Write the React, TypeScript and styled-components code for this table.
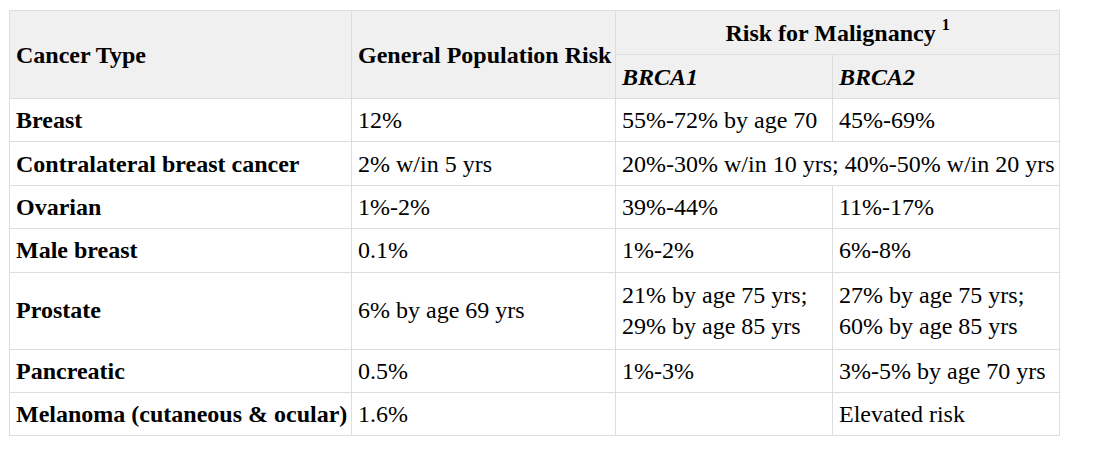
import styled, { createGlobalStyle } from 'styled-components'

const GlobalStyle = createGlobalStyle`
  body {
    margin: 0;
    background: #ffffff;
    font-family: "Liberation Serif", "Times New Roman", serif;
    color: #000000;
  }
`

const Page = styled.div`
  padding: 10px 0 0 9px;
`

const Table = styled.table`
  border-collapse: collapse;
  table-layout: fixed;
  width: 1050px;
  font-size: 24px;
`

const HeadCell = styled.th<{ $center?: boolean }>`
  background: #f0f0f0;
  border: 1px solid #dddddd;
  padding: 5px 6px 4px;
  line-height: 34px;
  font-weight: 700;
  text-align: ${(p) => (p.$center ? 'center' : 'left')};
  vertical-align: middle;
  white-space: nowrap;
`

const GeneName = styled.em`
  font-style: italic;
`

const Sup = styled.sup`
  font-size: 16px;
  line-height: 0;
  vertical-align: 11px;
`

const Cell = styled.td<{ $bold?: boolean; $multi?: boolean }>`
  border: 1px solid #dddddd;
  padding: ${(p) => (p.$multi ? '7px 6px' : '4.2px 6px')};
  line-height: ${(p) => (p.$multi ? '31px' : '34px')};
  font-weight: ${(p) => (p.$bold ? 700 : 400)};
  vertical-align: middle;
  white-space: nowrap;
`

type Row = {
  type: string
  general: string
  brca1: string[]
  brca2?: string[]
  span?: boolean
}

const rows: Row[] = [
  { type: 'Breast', general: '12%', brca1: ['55%-72% by age 70'], brca2: ['45%-69%'] },
  {
    type: 'Contralateral breast cancer',
    general: '2% w/in 5 yrs',
    brca1: ['20%-30% w/in 10 yrs; 40%-50% w/in 20 yrs'],
    span: true,
  },
  { type: 'Ovarian', general: '1%-2%', brca1: ['39%-44%'], brca2: ['11%-17%'] },
  { type: 'Male breast', general: '0.1%', brca1: ['1%-2%'], brca2: ['6%-8%'] },
  {
    type: 'Prostate',
    general: '6% by age 69 yrs',
    brca1: ['21% by age 75 yrs;', '29% by age 85 yrs'],
    brca2: ['27% by age 75 yrs;', '60% by age 85 yrs'],
  },
  { type: 'Pancreatic', general: '0.5%', brca1: ['1%-3%'], brca2: ['3%-5% by age 70 yrs'] },
  { type: 'Melanoma (cutaneous & ocular)', general: '1.6%', brca1: [], brca2: ['Elevated risk'] },
]

const Lines = ({ lines }: { lines: string[] }) => (
  <>
    {lines.map((l, i) => (
      <span key={i}>
        {i > 0 && <br />}
        {l}
      </span>
    ))}
  </>
)

const App = () => {
  return (
    <Page>
      <GlobalStyle />
      <Table>
        <colgroup>
          <col style={{ width: 342 }} />
          <col style={{ width: 264 }} />
          <col style={{ width: 217 }} />
          <col style={{ width: 227 }} />
        </colgroup>
        <thead>
          <tr>
            <HeadCell rowSpan={2}>Cancer Type</HeadCell>
            <HeadCell rowSpan={2}>General Population Risk</HeadCell>
            <HeadCell colSpan={2} $center>
              Risk for Malignancy <Sup>1</Sup>
            </HeadCell>
          </tr>
          <tr>
            <HeadCell>
              <GeneName>BRCA1</GeneName>
            </HeadCell>
            <HeadCell>
              <GeneName>BRCA2</GeneName>
            </HeadCell>
          </tr>
        </thead>
        <tbody>
          {rows.map((r) => {
            const multi = r.brca1.length > 1
            return (
              <tr key={r.type}>
                <Cell $bold $multi={multi}>{r.type}</Cell>
                <Cell $multi={multi}>{r.general}</Cell>
                {r.span ? (
                  <Cell colSpan={2}>{r.brca1[0]}</Cell>
                ) : (
                  <>
                    <Cell $multi={multi}>
                      <Lines lines={r.brca1} />
                    </Cell>
                    <Cell $multi={multi}>
                      <Lines lines={r.brca2 ?? []} />
                    </Cell>
                  </>
                )}
              </tr>
            )
          })}
        </tbody>
      </Table>
    </Page>
  )
}

export default App
